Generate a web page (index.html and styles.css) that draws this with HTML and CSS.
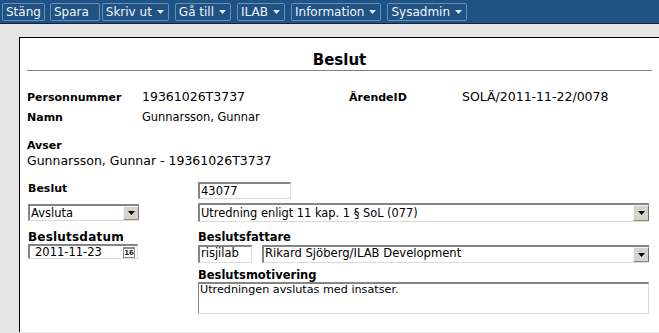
FILE: index.html
```html
<!DOCTYPE html>
<html lang="sv">
<head>
<meta charset="utf-8">
<title>Beslut</title>
<link rel="stylesheet" href="styles.css">
</head>
<body>
<div class="toolbar">
  <span class="tb-btn">Stäng</span>
  <span class="tb-btn tb-spara">Spara</span>
  <span class="tb-btn tb-menu tb-skriv">Skriv ut<svg class="caret" width="7" height="4" viewBox="0 0 7 4"><polygon points="0,0 7,0 3.5,4"/></svg></span>
  <span class="tb-btn tb-menu">Gå till<svg class="caret" width="7" height="4" viewBox="0 0 7 4"><polygon points="0,0 7,0 3.5,4"/></svg></span>
  <span class="tb-btn tb-menu">ILAB<svg class="caret" width="7" height="4" viewBox="0 0 7 4"><polygon points="0,0 7,0 3.5,4"/></svg></span>
  <span class="tb-btn tb-menu">Information<svg class="caret" width="7" height="4" viewBox="0 0 7 4"><polygon points="0,0 7,0 3.5,4"/></svg></span>
  <span class="tb-btn tb-menu">Sysadmin<svg class="caret" width="7" height="4" viewBox="0 0 7 4"><polygon points="0,0 7,0 3.5,4"/></svg></span>
</div>
<div class="main">
  <div class="panel">
    <h1 class="title">Beslut</h1>
    <div class="info">
      <div class="lbl">Personnummer</div>
      <div class="val">19361026T3737</div>
      <div class="lbl">ÄrendeID</div>
      <div class="val">SOLÄ/2011-11-22/0078</div>
      <div class="lbl">Namn</div>
      <div class="val val-small">Gunnarsson, Gunnar</div>
    </div>
    <div class="avser">
      <div class="lbl">Avser</div>
      <div class="val">Gunnarsson, Gunnar - 19361026T3737</div>
    </div>
    <div class="form">
      <div class="col-left">
        <div class="flbl flbl-first">Beslut</div>
        <div class="field select sel-left">
          <span class="sel-text">Avsluta</span>
          <span class="sel-btn"><svg width="7" height="4" viewBox="0 0 7 4"><polygon points="0,0 7,0 3.5,4"/></svg></span>
        </div>
        <div class="flbl flbl-row flbl-datum">Beslutsdatum</div>
        <div class="field date">
          <span class="date-text">2011-11-23</span>
          <span class="cal">16</span>
        </div>
      </div>
      <div class="col-right">
        <div class="field input-id">43077</div>
        <div class="field select sel-wide">
          <span class="sel-text">Utredning enligt 11 kap. 1 § SoL (077)</span>
          <span class="sel-btn"><svg width="7" height="4" viewBox="0 0 7 4"><polygon points="0,0 7,0 3.5,4"/></svg></span>
        </div>
        <div class="flbl flbl-row">Beslutsfattare</div>
        <div class="fattare">
          <div class="field input-user">risjilab</div>
          <div class="field select sel-user">
            <span class="sel-text">Rikard Sjöberg/ILAB Development</span>
            <span class="sel-btn"><svg width="7" height="4" viewBox="0 0 7 4"><polygon points="0,0 7,0 3.5,4"/></svg></span>
          </div>
        </div>
        <div class="flbl flbl-motiv">Beslutsmotivering</div>
        <div class="field textarea">Utredningen avslutas med insatser.</div>
      </div>
    </div>
  </div>
</div>
</body>
</html>
```

FILE: styles.css
```css
html, body {
  margin: 0;
  padding: 0;
  height: 100%;
  overflow: hidden;
}

body {
  font-family: "DejaVu Sans", Verdana, sans-serif;
  color: #000;
  background: #e5e5e5;
}

/* ---------- toolbar ---------- */
.toolbar {
  height: 24px;
  box-sizing: border-box;
  background: #1f5384;
  border-bottom: 1px solid #0b2744;
  padding: 3px 0 0 2px;
  display: flex;
  align-items: flex-start;
}

.tb-btn {
  display: inline-flex;
  align-items: center;
  height: 18px;
  box-sizing: border-box;
  border: 1px solid #6790b8;
  border-radius: 2px;
  padding: 0 3px;
  margin-left: 6px;
  color: #f2f5f8;
  font-size: 12px;
  line-height: 16px;
  white-space: nowrap;
}

.tb-btn:first-child {
  margin-left: 0;
}

.tb-spara {
  margin-left: 5px;
  padding-right: 10px;
}

.tb-skriv {
  margin-left: 2px;
}

.tb-menu {
  padding: 0 4px 0 3px;
}

.caret {
  margin-left: 5px;
  fill: #e6ecf2;
}

/* ---------- main area ---------- */
.main {
  padding: 13px 0 0 19px;
}

.panel {
  background: #fff;
  border-left: 1px solid #000;
  border-top: 1px solid #000;
  padding: 0 7px;
  min-height: 294px;
}

.title {
  margin: 12px 0 0 0;
  font-size: 15px;
  line-height: 20px;
  font-weight: bold;
  text-align: center;
  border-bottom: 1px solid #808080;
}

/* ---------- info ---------- */
.info {
  display: grid;
  grid-template-columns: 115px 207px 113px 1fr;
  grid-auto-rows: 20px;
  align-items: baseline;
  margin-top: 16px;
}

.lbl {
  font-size: 11px;
  font-weight: bold;
  line-height: 20px;
  white-space: nowrap;
}

.val {
  font-size: 12.5px;
  line-height: 20px;
  white-space: nowrap;
}

.val-small {
  font-size: 11.4px;
}

.avser {
  margin-top: 11px;
}

.avser .lbl,
.avser .val {
  line-height: 15px;
}

/* ---------- form ---------- */
.form {
  display: flex;
  margin-top: 14px;
  padding-left: 1px;
  column-gap: 59px;
}

.col-left {
  width: 111px;
  display: flex;
  flex-direction: column;
}

.col-right {
  width: 451px;
  display: flex;
  flex-direction: column;
}

.flbl {
  font-size: 11.5px;
  font-weight: bold;
  line-height: 14px;
  white-space: nowrap;
}

.flbl-first {
  font-size: 11px;
  line-height: 13px;
}

.flbl-row {
  margin-top: 8px;
}

.col-left .flbl-row {
  margin-top: 9px;
}

.flbl-datum {
  font-size: 12px;
  letter-spacing: 0.2px;
}

.flbl-motiv {
  margin-top: 5px;
}

.field {
  box-sizing: border-box;
  background: #fff;
  border-top: 2px solid #858585;
  border-left: 2px solid #858585;
  border-right: 1px solid #dadada;
  border-bottom: 1px solid #dadada;
  font-size: 11px;
  padding-left: 1px;
  white-space: nowrap;
  overflow: hidden;
}

.select {
  display: flex;
  border-right: 0;
}

.sel-text {
  flex: 1;
  overflow: hidden;
}

.sel-btn {
  width: 16px;
  box-sizing: border-box;
  background: #d6d3cc;
  border-top: 1px solid #f6f6f6;
  border-left: 1px solid #f6f6f6;
  border-right: 1px solid #6e6e6e;
  border-bottom: 1px solid #8a8a8a;
  display: flex;
  align-items: center;
  justify-content: center;
}

.sel-btn svg {
  fill: #000;
}

.sel-left {
  margin-top: 9px;
  height: 17px;
  line-height: 14px;
  font-size: 11.5px;
}

.sel-wide {
  margin-top: 4px;
  height: 19px;
  line-height: 16px;
  font-size: 11.4px;
}

.date {
  display: flex;
  align-items: center;
  width: 110px;
  height: 15px;
  line-height: 12px;
  padding-left: 5px;
  font-size: 11.5px;
}

.date-text {
  flex: 1;
}

.cal {
  width: 12px;
  height: 11px;
  box-sizing: border-box;
  border: 1px solid #8c8c8c;
  border-top-width: 2px;
  margin-right: 2px;
  font-size: 7px;
  font-weight: bold;
  line-height: 8px;
  text-align: center;
  color: #222;
  background: #fff;
}

.input-id {
  width: 93px;
  height: 17px;
  padding-top: 1px;
  line-height: 13px;
  font-size: 11.5px;
}

.fattare {
  display: flex;
  margin-top: 1px;
  column-gap: 10px;
  height: 18px;
}

.input-user {
  width: 54px;
  height: 18px;
  line-height: 13px;
  font-size: 11.5px;
}

.sel-user {
  flex: 1;
  height: 18px;
  line-height: 13px;
  font-size: 11.6px;
}

.textarea {
  width: 451px;
  height: 32px;
  line-height: 12px;
  font-size: 11.2px;
  border-left-width: 1px;
  border-right: 1px solid #dadada;
}
```
